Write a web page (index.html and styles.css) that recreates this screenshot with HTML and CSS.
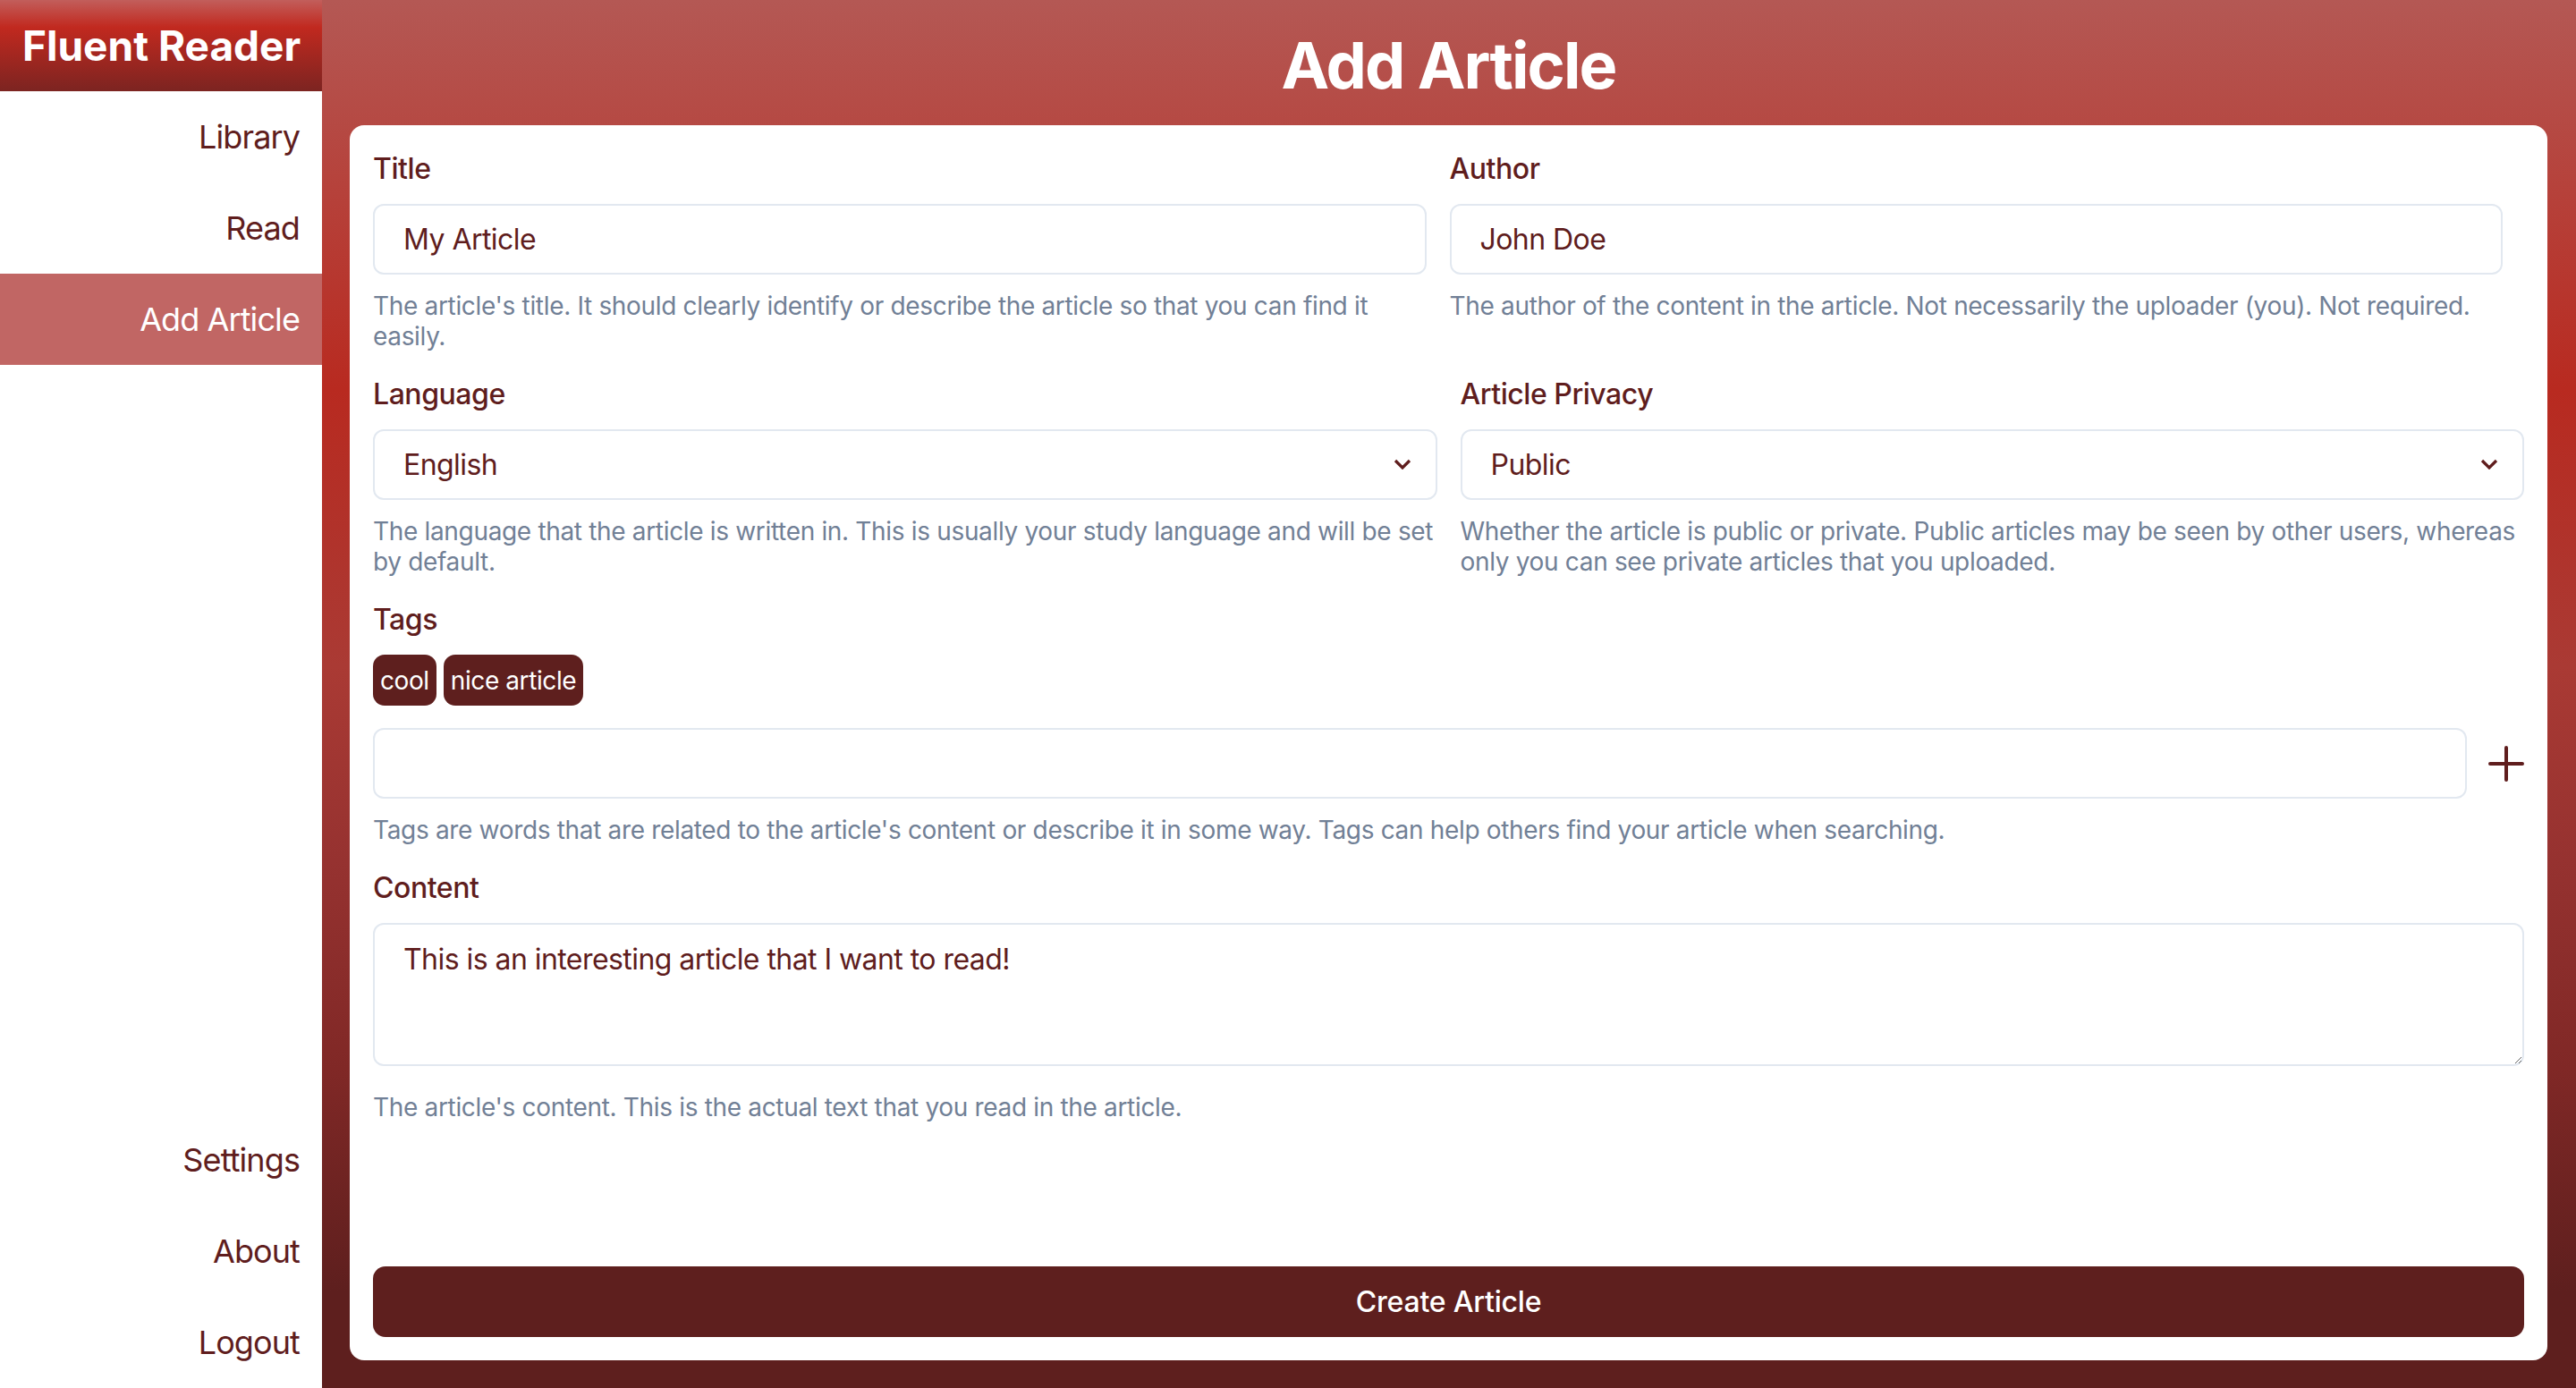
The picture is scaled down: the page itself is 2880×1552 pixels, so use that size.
FILE: index.html
```html
<!DOCTYPE html>
<html lang="en">
<head>
<meta charset="utf-8">
<title>Fluent Reader - Add Article</title>
<link rel="stylesheet" href="styles.css">
</head>
<body>
<div class="app">
  <aside class="sidebar">
    <div class="brand">Fluent Reader</div>
    <nav class="nav nav-top">
      <a class="nav-item">Library</a>
      <a class="nav-item">Read</a>
      <a class="nav-item active">Add Article</a>
    </nav>
    <nav class="nav nav-bottom">
      <a class="nav-item">Settings</a>
      <a class="nav-item">About</a>
      <a class="nav-item">Logout</a>
    </nav>
  </aside>
  <main class="main">
    <h1 class="page-title">Add Article</h1>
    <form class="card">
      <div class="row row-first">
        <div class="field">
          <label class="label">Title</label>
          <input class="input" type="text" value="My Article">
          <p class="help">The article's title. It should clearly identify or describe the article so that you can find it easily.</p>
        </div>
        <div class="field">
          <label class="label">Author</label>
          <input class="input" type="text" value="John Doe">
          <p class="help">The author of the content in the article. Not necessarily the uploader (you). Not required.</p>
        </div>
      </div>
      <div class="row">
        <div class="field">
          <label class="label">Language</label>
          <div class="select-wrap">
            <select class="input select"><option>English</option></select>
            <svg class="chevron" viewBox="0 0 20 12" width="20" height="12"><path d="M2 2 L10 10 L18 2" fill="none" stroke="currentColor" stroke-width="3.2"/></svg>
          </div>
          <p class="help">The language that the article is written in. This is usually your study language and will be set by default.</p>
        </div>
        <div class="field">
          <label class="label">Article Privacy</label>
          <div class="select-wrap">
            <select class="input select"><option>Public</option></select>
            <svg class="chevron" viewBox="0 0 20 12" width="20" height="12"><path d="M2 2 L10 10 L18 2" fill="none" stroke="currentColor" stroke-width="3.2"/></svg>
          </div>
          <p class="help">Whether the article is public or private. Public articles may be seen by other users, whereas only you can see private articles that you uploaded.</p>
        </div>
      </div>
      <div class="field field-block">
        <label class="label">Tags</label>
        <div class="chips">
          <span class="chip">cool</span>
          <span class="chip">nice article</span>
        </div>
        <div class="tag-row">
          <input class="input tag-input" type="text" value="">
          <svg class="plus" viewBox="0 0 40 40" width="40" height="40"><path d="M20 2 V38 M2 20 H38" fill="none" stroke="currentColor" stroke-width="4" stroke-linecap="round"/></svg>
        </div>
        <p class="help">Tags are words that are related to the article's content or describe it in some way. Tags can help others find your article when searching.</p>
      </div>
      <div class="field field-block">
        <label class="label">Content</label>
        <textarea class="input textarea">This is an interesting article that I want to read!</textarea>
        <p class="help help-wide">The article's content. This is the actual text that you read in the article.</p>
      </div>
      <button class="submit" type="button">Create Article</button>
    </form>
  </main>
</div>
</body>
</html>
```

FILE: styles.css
```css
* { box-sizing: border-box; }

html, body {
  margin: 0;
  padding: 0;
  height: 100%;
}

body {
  font-family: Inter, "Noto Sans", "Liberation Sans", sans-serif;
  color: #5f1d1d;
  background: #ffffff;
}

.app {
  display: flex;
  width: 2880px;
  height: 1552px;
}

/* Sidebar */
.sidebar {
  width: 360px;
  flex: none;
  display: flex;
  flex-direction: column;
  background: #ffffff;
}

.brand {
  height: 102px;
  display: flex;
  align-items: center;
  padding-left: 25px;
  font-size: 46px;
  font-weight: 700;
  color: #ffffff;
  background: linear-gradient(to bottom, #c25e5b 0%, #c1291f 30%, #7c2421 100%);
}

.nav {
  display: flex;
  flex-direction: column;
}

.nav-bottom {
  margin-top: auto;
}

.nav-item {
  height: 102px;
  display: flex;
  align-items: center;
  justify-content: flex-end;
  padding-right: 25px;
  font-size: 36px;
  letter-spacing: -0.9px;
  color: #5f1d1d;
  cursor: pointer;
}

.nav-item.active {
  background: #c16664;
  color: #ffffff;
}

/* Main */
.main {
  flex: 1;
  display: flex;
  flex-direction: column;
  padding: 0 32px 31px 31px;
  background: linear-gradient(to bottom,
    #b45854 0%,
    #b82a20 28%,
    #aa3a34 48%,
    #963230 62%,
    #802826 77%,
    #5e1f1e 93%,
    #5e1f1e 100%);
}

.page-title {
  margin: 0;
  height: 140px;
  padding-top: 6px;
  line-height: 134px;
  text-align: center;
  font-size: 72px;
  font-weight: 700;
  letter-spacing: -1.9px;
  color: #ffffff;
}

.card {
  flex: 1;
  display: flex;
  flex-direction: column;
  background: #ffffff;
  border-radius: 16px;
  padding: 30px 26px 26px 26px;
}

.row {
  display: grid;
  grid-template-columns: 1fr 1fr;
  column-gap: 26px;
  margin-bottom: 29px;
}

.row-first {
  padding-right: 24px;
}

.field {
  display: flex;
  flex-direction: column;
  min-width: 0;
}

.field-block {
  margin-bottom: 29px;
}

.label {
  display: block;
  font-size: 32px;
  line-height: 38px;
  font-weight: 500;
  letter-spacing: -0.45px;
  color: #5f1d1d;
  margin-bottom: 20px;
}

.input {
  display: block;
  width: 100%;
  height: 79px;
  border: 2px solid #e2e8f0;
  border-radius: 12px;
  padding: 0 32px;
  font-family: inherit;
  font-size: 32px;
  letter-spacing: -0.55px;
  color: #5f1d1d;
  background: #ffffff;
  outline: none;
}

.select-wrap {
  position: relative;
}

.select {
  appearance: none;
  -webkit-appearance: none;
}

.chevron {
  position: absolute;
  right: 29px;
  top: 33px;
  color: #5f1d1d;
  pointer-events: none;
}

.help {
  margin: 18px 0 0 0;
  font-size: 28px;
  line-height: 34px;
  letter-spacing: -0.33px;
  color: #718096;
}

.help-wide {
  margin-top: 29px;
}

.chips {
  display: flex;
  gap: 8px;
  margin-bottom: 25px;
}

.chip {
  height: 57px;
  display: flex;
  align-items: center;
  padding: 0 8px;
  border-radius: 13px;
  background: #5e1f1e;
  color: #ffffff;
  font-size: 28px;
  letter-spacing: -0.4px;
}

.tag-row {
  display: flex;
  align-items: center;
  gap: 24px;
}

.tag-input {
  flex: 1;
}

.plus {
  flex: none;
  color: #5f1d1d;
}

.textarea {
  height: 160px;
  padding: 20px 32px;
  line-height: 38px;
  resize: vertical;
}

.submit {
  margin-top: auto;
  height: 79px;
  width: 100%;
  border: none;
  border-radius: 14px;
  background: #5e1f1e;
  color: #ffffff;
  font-family: inherit;
  font-size: 32px;
  font-weight: 500;
  letter-spacing: -0.2px;
  cursor: pointer;
}
```
